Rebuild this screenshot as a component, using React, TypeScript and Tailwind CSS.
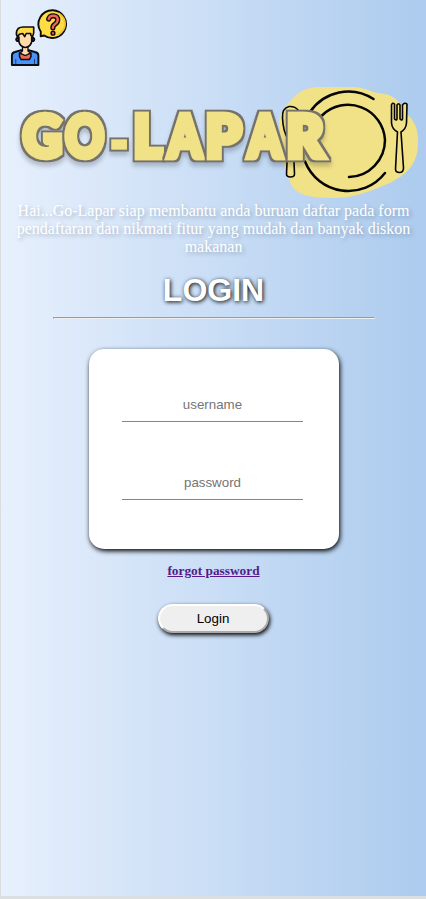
import React from "react";

function HelpIcon() {
  return (
    <svg className="block h-[58px] w-[58px]" viewBox="0 0 58 58" fill="none" stroke="#0b0b12" strokeWidth="1.9" strokeLinejoin="round" strokeLinecap="round" aria-label="help">
      <path d="M1.900 56V46.500q0-2.800 3-3.500l5.500-1.700h9l5.500 1.700q3.500.7 3.500 3.500V56z" fill="#4793fa" />
      <path d="M5.800 50.500v5M24.500 50.500v5" strokeWidth="0.600" />
      <path d="M9.500 44v3.500l1.500 3h8.500l1.500-3V44l-6 2z" fill="#ee654e" strokeWidth="1.500" />
      <path d="M12.500 37v5l-2.500 2 5.200 2.500L20.500 44l-2.500-2v-5z" fill="#ffdba9" strokeWidth="1.300" />
      <path d="M8.500 29H6.800q-1.300 1.500.3 3h1.500zM22 29h1.700q1.300 1.500-.3 3H22z" fill="#ffdba9" />
      <path d="M9.200 25h12.200v7.500q-1 5.500-6.100 6-5.100-.5-6.100-6z" fill="#ffdba9" stroke="none" />
      <path d="M8.900 28v4.500q1 5.500 6.400 6 5.400-.5 6.400-6V28" strokeWidth="1.600" />
      <path d="M7.700 28q-2-2-1-6l1.500-2.500q2-1.500 5-1.500h10.500v6l-1.300 4-1.700-2v-1.500h-4.500l-1.500 3.200-2-3.200-3.500.8z" fill="#ffdc46" strokeWidth="1.600" />
      <path d="M42.700 1.200a13.900 13.900 0 1 1-8.500 25.300l-3.500.8.100-4.500A13.900 13.900 0 0 1 42.700 1.200z" fill="#fddd43" />
      <path d="M49 4.500q6 4 6 10.500T48 25.800" stroke="#f5c22c" strokeWidth="2" />
      <path d="M38.700 10q1-3.500 5-3.200 4.500.5 4 4.500-.2 2.400-3 4.200-1.800 1-1.800 3.200" strokeWidth="5.200" />
      <path d="M38.700 10q1-3.500 5-3.200 4.500.5 4 4.500-.2 2.400-3 4.200-1.800 1-1.800 3.200" stroke="#f4634b" strokeWidth="2.500" />
      <circle cx="43" cy="24.200" r="1.900" fill="#e8513d" strokeWidth="1.400" />
    </svg>
  );
}

const letters = [
  { char: "G", x: 22.9, y: 156.5, sx: 0.94, sy: 1 },
  { char: "O", x: 65.5, y: 156.5, sx: 0.83, sy: 1 },
  { char: "-", x: 111.4, y: 158, sx: 0.72, sy: 0.75 },
  { char: "L", x: 133.8, y: 156.5, sx: 0.94, sy: 1 },
  { char: "A", x: 168.5, y: 156.5, sx: 0.82, sy: 1 },
  { char: "P", x: 205.8, y: 156.5, sx: 0.99, sy: 1 },
  { char: "A", x: 248.5, y: 156.5, sx: 0.82, sy: 1 },
  { char: "R", x: 286.8, y: 156.5, sx: 0.99, sy: 1 },
];

function Banner() {
  return (
    <svg className="block h-[124px] w-[425px]" viewBox="1 78 425 124" aria-label="GO-LAPAR">
      <defs>
        <filter id="wordmark" filterUnits="userSpaceOnUse" x="0" y="90" width="426" height="100">
          <feMorphology in="SourceAlpha" operator="dilate" radius="1.5" result="wide" />
          <feFlood floodColor="#74726c" />
          <feComposite in2="wide" operator="in" result="outline" />
          <feMerge>
            <feMergeNode in="outline" />
            <feMergeNode in="SourceGraphic" />
          </feMerge>
        </filter>
      </defs>
      <path d="M284 110C292 97 301 87.500 318 87H352C366 87 371 93 382 93.500 397 95 402 107 408 115 416 123 418 130 418 143 418 164 407 174 390 183 374 189 357 198 334 198 309 198 295 195 290 182 287 172 281 165 284 150 280 133 275 122 284 110Z" fill="#f1e288" />
      <g fill="none" stroke="#050505" strokeWidth="2.500" strokeLinecap="round">
        <path d="M373.500 99A46 46 0 0 0 310 112" />
        <path d="M305 161.500A46.500 46.500 0 0 0 385 173" />
        <path d="M322 115.500A37 37 0 0 1 385 140A37 37 0 0 1 349 177" />
      </g>
      <g fill="#f1e288" stroke="#050505" strokeWidth="1.600" strokeLinejoin="round">
        <path d="M298 110Q295 106 289 106.500 282 108 282.500 118 283 131 288 139L286.500 174Q286.500 177 290.500 177T294.500 174L293 139 298 128Z" />
        <path d="M391.500 105Q392.500 102 394.500 104V119Q396.500 121 397 119V105Q398.500 102.500 400 105V119Q402 121 402.500 119V105Q404.500 102 407 104L406.500 123Q406 129 401 132L403.500 168Q403.500 172.500 399.500 172.500T395.500 169L397.500 132Q392 129 391.500 123Z" />
      </g>
      <g className="drop-shadow-[0_4px_2px_rgba(0,0,0,0.2)]">
        {letters.map((letter, index) => (
          <g key={index} filter="url(#wordmark)">
            <text
              transform={`translate(${letter.x} ${letter.y}) scale(${letter.sx} ${letter.sy})`}
              className="[font-family:Lato,sans-serif] text-[57px] font-black"
              fill="#f1e288"
              stroke="#f1e288"
              strokeWidth="6.500"
              strokeLinejoin="miter"
              strokeMiterlimit="3"
            >
              {letter.char}
            </text>
          </g>
        ))}
      </g>
    </svg>
  );
}

function Field({ type, label }: { type: string; label: string }) {
  return (
    <input
      type={type}
      placeholder={label}
      className="h-[35px] w-[181px] border-b border-[#858585] bg-transparent pl-px text-center text-[13.333px] text-black outline-none [font-family:'Liberation_Sans',sans-serif] placeholder:text-[#757575]"
    />
  );
}

export default function App() {
  return (
    <div className="h-[899px] w-full overflow-hidden bg-[#dcdfe2] pb-[3px]">
      <main className="flex h-[896px] flex-col items-center border-l border-[#dddde0] bg-gradient-to-r from-[#e7f0fd] to-[#accbee] [--tw-gradient-position:to_right] [font-family:'Liberation_Serif',serif]">
        <div className="h-[78px] self-start pt-[9px] pl-[9px]">
          <HelpIcon />
        </div>
        <Banner />
        <p className="w-[409px] text-center text-base leading-[18px] text-white [text-shadow:2px_2px_4px_rgba(0,0,0,0.25)]">
          Hai...Go-Lapar siap membantu anda buruan daftar pada form pendaftaran dan nikmati fitur yang mudah dan banyak diskon makanan
        </p>
        <h1 className="mt-4 text-[32px] leading-[37px] font-bold text-white [font-family:'Liberation_Sans',sans-serif] [text-shadow:1px_1px_4px_#000]">LOGIN</h1>
        <hr className="mt-2 h-[2px] w-[322px] border border-t-[#9a9a9a] border-r-[#eeeeee] border-b-[#eeeeee] border-l-[#9a9a9a]" />
        <form className="flex flex-col items-center" onSubmit={(event) => event.preventDefault()}>
          <section className="mt-[30px] flex h-[200px] w-[250px] flex-col gap-[43px] rounded-[15px] bg-white pt-[38px] pl-[33px] shadow-[1px_2px_5px_#000]">
            <Field type="text" label="username" />
            <Field type="password" label="password" />
          </section>
          <a href="#" className="mt-[14px] text-[13.333px] leading-[15px] font-bold text-[#551a8b] underline">
            forgot password
          </a>
          <button className="mt-[26px] mr-px h-[29px] w-[111px] rounded-[20px] border-2 border-white [border-style:outset] bg-[#efefef] text-[13.333px] text-black shadow-[1px_2px_4px_#000] [font-family:'Liberation_Sans',sans-serif]">
            Login
          </button>
        </form>
      </main>
    </div>
  );
}
